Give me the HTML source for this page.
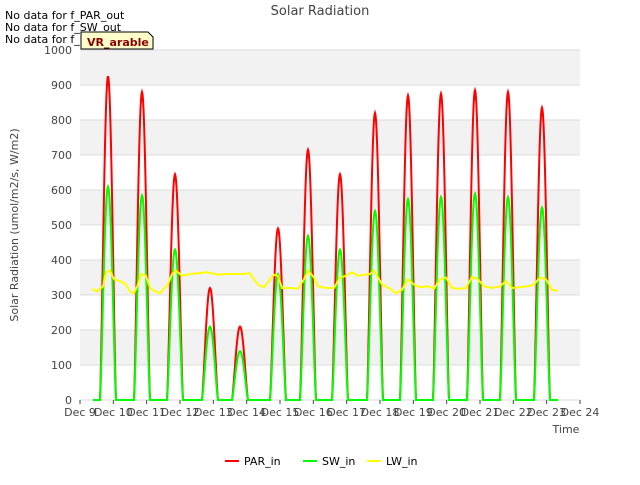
<!DOCTYPE html>
<html><head><style>
body{margin:0;width:640px;height:480px;background:#fff;font-family:"Liberation Sans","DejaVu Sans",sans-serif;overflow:hidden}
svg text{font-family:"DejaVu Sans","Liberation Sans",sans-serif}
</style></head><body>
<svg id="s" width="640" height="480" xmlns="http://www.w3.org/2000/svg">
<rect x="80" y="50" width="500" height="350" fill="#fff"/>
<g fill="#f2f2f2">
<rect x="80" y="50" width="500" height="35"/>
<rect x="80" y="120" width="500" height="35"/>
<rect x="80" y="190" width="500" height="35"/>
<rect x="80" y="260" width="500" height="35"/>
<rect x="80" y="330" width="500" height="35"/>
</g>
<g id="grid" stroke="#dcdcdc" stroke-width="1"></g>
<g id="ylab" font-size="11" fill="#444" text-anchor="end"></g>
<g id="xlab" font-size="11" fill="#444" text-anchor="middle"></g>
<g id="data"></g>
<text x="320" y="15" font-size="13" fill="#444" text-anchor="middle">Solar Radiation</text>
<text x="566" y="433" font-size="11" fill="#444" text-anchor="middle">Time</text>
<text transform="translate(18,225) rotate(-90)" font-size="11" fill="#444" text-anchor="middle">Solar Radiation (umol/m2/s, W/m2)</text>
<g font-size="11" fill="#000">
<text x="5" y="19">No data for f_PAR_out</text>
<text x="5" y="31">No data for f_SW_out</text>
<text x="5" y="43">No data for f_LW_out</text>
</g>
<path d="M81,32 H148 L153,37 V49 H81 Z" fill="#ffffcc" stroke="#000" stroke-width="1"/>
<text x="87" y="46" font-size="11" font-weight="bold" fill="#8b0000">VR_arable</text>
<line x1="225" y1="461" x2="239" y2="461" stroke="#f00" stroke-width="2"/>
<text x="244" y="465" font-size="11" fill="#000">PAR_in</text>
<line x1="303" y1="461" x2="317" y2="461" stroke="#0f0" stroke-width="2"/>
<text x="322" y="465" font-size="11" fill="#000">SW_in</text>
<line x1="367" y1="461" x2="381" y2="461" stroke="#ff0" stroke-width="2"/>
<text x="386" y="465" font-size="11" fill="#000">LW_in</text>
</svg>
<script>
var NS="http://www.w3.org/2000/svg";
function el(p,t,a,txt){var e=document.createElementNS(NS,t);for(var k in a)e.setAttribute(k,a[k]);if(txt!=null)e.textContent=txt;document.getElementById(p).appendChild(e);return e;}
function Y(v){return 400-v*0.35;}
for(var v=0;v<=1000;v+=100){el("grid","line",{x1:80,x2:580,y1:Y(v),y2:Y(v)});el("ylab","text",{x:72,y:Y(v)+4},v);}
for(var d=0;d<=15;d++){var x=80+d*33.333;el("grid","line",{x1:x,x2:x,y1:400,y2:404,stroke:"#444"});el("xlab","text",{x:x,y:416},"Dec "+(9+d));}
var days=[[108,925,610],[142,880,585],[175,645,430],[210,320,210],[240,210,140],[278,490,360],[308,715,470],[340,645,430],[375,820,540],[408,870,575],[441,875,580],[475,885,590],[508,880,580],[542,835,550]];
function series(idx){var pts=[[93,0]];days.forEach(function(d){var p=d[0],h=d[idx];pts.push([p-9,0]);for(var i=-8;i<=8;i+=0.5){var f=Math.cos(i/8*Math.PI/2);f=Math.pow(Math.max(f,0),1.3);pts.push([p+i,h*f]);}pts.push([p+9,0]);});pts.push([558,0]);return pts.map(function(q){return q[0].toFixed(1)+","+Y(q[1]).toFixed(1)}).join(" ");}
el("data","polyline",{points:series(1),fill:"none",stroke:"#f00","stroke-width":2});
el("data","polyline",{points:series(2),fill:"none",stroke:"#0f0","stroke-width":2});
var lw=[[92,318],[97,310],[103,325],[106,365],[110,370],[114,345],[120,340],[126,330],[130,310],[134,305],[138,330],[141,360],[146,355],[150,320],[155,310],[160,305],[164,318],[168,330],[172,360],[176,370],[182,355],[190,360],[198,362],[206,365],[212,362],[218,358],[226,360],[234,360],[242,360],[250,362],[254,345],[258,330],[264,322],[270,345],[274,358],[278,355],[282,320],[290,320],[298,318],[304,345],[308,370],[314,350],[318,325],[326,320],[334,320],[340,350],[346,355],[352,365],[358,355],[364,358],[370,360],[374,370],[378,350],[382,330],[390,318],[396,305],[402,315],[408,345],[414,330],[420,322],[428,325],[434,318],[440,345],[446,350],[452,320],[460,318],[466,320],[472,352],[478,345],[484,325],[492,320],[500,325],[506,340],[512,320],[520,322],[528,325],[534,330],[540,350],[546,345],[552,315],[558,312]];
el("data","polyline",{points:lw.map(function(q){return q[0]+","+Y(q[1]).toFixed(1)}).join(" "),fill:"none",stroke:"#ff0","stroke-width":2});
</script>
</body></html>
